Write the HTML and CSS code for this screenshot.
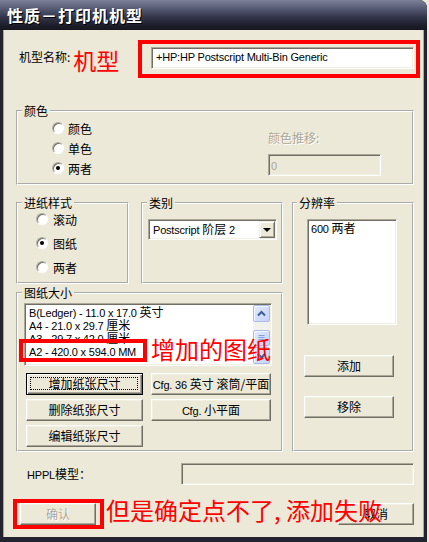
FILE: index.html
```html
<!DOCTYPE html>
<html lang="zh-CN">
<head>
    <meta charset="UTF-8">
    <title>性质－打印机机型</title>
    <link rel="stylesheet" href="styles.css">
</head>
<body>
<div class="window">
    <div class="titlebar">性质－打印机机型</div>

    <div class="client">
        <div class="name-row">
            <span class="name-label">机型名称:</span>
            <span class="note name-note">机型</span>
            <div class="sunken name-box lat">+HP:HP Postscript Multi-Bin Generic</div>
        </div>

        <fieldset class="group color-group">
            <legend>颜色</legend>
            <div class="color-body">
                <div class="radios">
                    <div class="radio"><span class="dot"></span>颜色</div>
                    <div class="radio"><span class="dot"></span>单色</div>
                    <div class="radio"><span class="dot checked"></span>两者</div>
                </div>
                <div class="shift">
                    <div class="disabled">颜色推移:</div>
                    <div class="sunken off shift-box"><span class="lat">0</span></div>
                </div>
            </div>
        </fieldset>

        <div class="middle">
            <div class="left-col">
                <div class="top-pair">
                    <fieldset class="group small-group">
                        <legend>进纸样式</legend>
                        <div class="feed-radios">
                            <div class="radio"><span class="dot"></span>滚动</div>
                            <div class="radio"><span class="dot checked"></span>图纸</div>
                            <div class="radio"><span class="dot"></span>两者</div>
                        </div>
                    </fieldset>
                    <fieldset class="group small-group">
                        <legend>类别</legend>
                        <div class="sunken combo">
                            <span class="combo-text"><span class="lat">Postscript </span>阶层<span class="lat"> 2</span></span>
                            <span class="combo-btn"><span class="arrow-down"></span></span>
                        </div>
                    </fieldset>
                </div>

                <fieldset class="group paper-group">
                    <legend>图纸大小</legend>
                    <div class="sunken paper-list">
                        <div class="paper-items">
                            <div class="item"><span class="lat">B(Ledger) - 11.0 x 17.0 </span>英寸</div>
                            <div class="item"><span class="lat">A4 - 21.0 x 29.7 </span>厘米</div>
                            <div class="item"><span class="lat">A3 - 29.7 x 42.0 </span>厘米</div>
                            <div class="item"><span class="lat">A2 - 420.0 x 594.0 MM</span></div>
                        </div>
                        <div class="scrollbar">
                            <div class="sb-btn">
                                <svg width="15" height="15" viewBox="0 0 15 15"><path d="M4 9.5 L7.5 6 L11 9.5" fill="none" stroke="#3f5c9c" stroke-width="2"/></svg>
                            </div>
                            <div class="sb-gap"></div>
                            <div class="sb-btn sb-thumb">
                                <svg width="15" height="14" viewBox="0 0 15 14"><path d="M4.5 4.5h6M4.5 6.5h6M4.5 8.5h6M4.5 10.5h6" stroke="#8aa0d4" stroke-width="1"/></svg>
                            </div>
                            <div class="sb-track"></div>
                            <div class="sb-btn">
                                <svg width="15" height="15" viewBox="0 0 15 15"><path d="M4 6 L7.5 9.5 L11 6" fill="none" stroke="#3f5c9c" stroke-width="2"/></svg>
                            </div>
                        </div>
                    </div>
                    <div class="paper-buttons">
                        <div class="btn focus"><span>增加纸张尺寸</span></div>
                        <div class="btn"><span class="lat">Cfg. 36 </span>英寸 滚筒/平面</div>
                        <div class="btn">删除纸张尺寸</div>
                        <div class="btn"><span class="lat">Cfg. </span>小平面</div>
                        <div class="btn">编辑纸张尺寸</div>
                    </div>
                </fieldset>
            </div>

            <fieldset class="group res-group">
                <legend>分辨率</legend>
                <div class="sunken res-list"><span class="lat">600 </span>两者</div>
                <div class="btn res-btn first">添加</div>
                <div class="btn res-btn">移除</div>
            </fieldset>
        </div>

        <div class="hppl-row">
            <span class="hppl-label"><span class="lat">HPPL</span>模型：</span>
            <div class="sunken off hppl-box"></div>
        </div>

        <div class="button-row">
            <div class="btn dlg-btn off-text">确认</div>
            <div class="btn dlg-btn">取消</div>
        </div>
    </div>

    <!-- red annotations drawn over the dialog -->
    <div class="mark mark-name"></div>
    <div class="mark mark-a2"></div>
    <div class="note note-paper">增加的图纸</div>
    <div class="mark mark-ok"></div>
    <div class="note note-ok">但是确定点不了, 添加失败</div>
</div>
</body>
</html>
```

FILE: styles.css
```css
body {
    margin: 0;
    background: #ece9d8;
    font-family: "Noto Sans CJK SC", sans-serif;
    font-size: 12px;
    color: #000;
}

.lat {
    font-family: "Liberation Sans", "Noto Sans CJK SC", sans-serif;
    font-size: 11px;
    letter-spacing: -0.2px;
}

.window {
    position: relative;
    width: 427px;
    height: 542px;
    box-sizing: border-box;
    padding: 0 3px 5px 3px;
    background: #23242f;
    border-top-right-radius: 8px;
    display: flex;
    flex-direction: column;
}

.titlebar {
    height: 30px;
    margin: 0 -3px;
    padding-left: 7px;
    background: linear-gradient(#7d8199 0%, #5b5f78 25%, #35384d 55%, #1d1e2b 85%, #16161f 100%);
    border-top-right-radius: 8px;
    color: #fff;
    font-size: 16px;
    font-weight: bold;
    line-height: 30px;
    letter-spacing: 1px;
    text-shadow: 1px 1px 0 #000;
}

.client {
    flex: 1;
    background: #ece9d8;
    box-shadow: inset 1px 0 0 #aca899, inset -1px 0 0 #aca899;
    padding: 10px 10px 0 13px;
}

/* common controls */
.sunken {
    box-sizing: border-box;
    background: #fff;
    border: 1px solid;
    border-color: #aca899 #fff #fff #aca899;
    box-shadow: inset 1px 1px 0 #716f64, inset -1px -1px 0 #f1efe2;
    padding: 1px;
}

.sunken.off {
    background: #ece9d8;
    color: #aca899;
}

.btn {
    position: relative;
    box-sizing: border-box;
    height: 22px;
    background: #ece9d8;
    border: 1px solid;
    border-color: #fff #716f64 #716f64 #fff;
    box-shadow: inset -1px -1px 0 #aca899, inset 1px 1px 0 #f1efe2;
    text-align: center;
    line-height: 20px;
    white-space: nowrap;
}

.btn.focus {
    border-color: #000;
    box-shadow: inset 1px 1px 0 #fff, inset -1px -1px 0 #716f64, inset -2px -2px 0 #aca899;
}

.btn.focus::after {
    content: "";
    position: absolute;
    left: 3px;
    top: 3px;
    right: 4px;
    bottom: 4px;
    border: 1px dotted #000;
}

.off-text, .disabled {
    color: #aca899;
    text-shadow: 1px 1px 0 #fff;
}

.group {
    box-sizing: border-box;
    margin: 0;
    padding: 0;
    min-width: 0;
    border: 2px groove #fff;
}

.group legend {
    margin-left: 4px;
    padding: 0 2px;
    line-height: 14px;
}

.radio {
    display: flex;
    align-items: center;
    height: 20px;
}

.dot {
    position: relative;
    box-sizing: border-box;
    width: 12px;
    height: 12px;
    margin-right: 4px;
    border-radius: 50%;
    background: #fff;
    border: 1px solid;
    border-color: #aca899 #fff #fff #aca899;
    box-shadow: inset 1px 1px 0 #716f64, 0 0 0 0.5px #f1efe2;
}

.dot.checked::after {
    content: "";
    position: absolute;
    left: 3px;
    top: 3px;
    width: 4px;
    height: 4px;
    border-radius: 50%;
    background: #000;
}

/* name row */
.name-row {
    display: flex;
    align-items: flex-start;
    height: 38px;
}

.name-label {
    margin: 10px 0 0 3px;
    line-height: 14px;
}

.note {
    color: #f00;
    font-size: 24px;
    line-height: 24px;
    white-space: nowrap;
}

.name-note {
    margin: 8px 0 0 3px;
    font-size: 23px;
}

.name-box {
    margin: 7px 0 0 auto;
    width: 263px;
    height: 22px;
    padding-left: 4px;
    line-height: 17px;
}

/* colour group */
.color-group {
    margin-top: 26px;
}

.color-body {
    display: grid;
    grid-template-columns: 250px 1fr;
    padding-bottom: 5px;
}

.radios {
    padding-left: 34px;
}

.shift {
    padding-top: 13px;
    line-height: 14px;
}

.shift-box {
    margin-top: 9px;
    width: 113px;
    height: 22px;
    padding-left: 2px;
    line-height: 18px;
}

/* middle block */
.middle {
    display: grid;
    grid-template-columns: 267px 122px;
    column-gap: 9px;
    margin-top: 11px;
}

.left-col {
    display: flex;
    flex-direction: column;
    gap: 2px;
}

.top-pair {
    display: grid;
    grid-template-columns: 113px 142px;
    column-gap: 12px;
}

.small-group {
    height: 88px;
}

.feed-radios {
    display: flex;
    flex-direction: column;
    gap: 6px;
    padding-left: 18px;
}

.feed-radios .radio {
    height: 18px;
}

.feed-radios .dot {
    margin-right: 5px;
}

.combo {
    display: flex;
    align-items: center;
    justify-content: space-between;
    margin: 9px 0 0 5px;
    width: 129px;
    height: 21px;
}

.combo-text {
    padding-left: 3px;
    line-height: 14px;
}

.combo-btn {
    box-sizing: border-box;
    width: 16px;
    height: 17px;
    display: flex;
    align-items: center;
    justify-content: center;
    background: #ece9d8;
    border: 1px solid;
    border-color: #f1efe2 #716f64 #716f64 #f1efe2;
    box-shadow: inset 1px 1px 0 #fff, inset -1px -1px 0 #aca899;
}

.arrow-down {
    width: 0;
    height: 0;
    border-left: 4px solid transparent;
    border-right: 4px solid transparent;
    border-top: 4px solid #000;
}

/* paper sizes */
.paper-group {
    height: 166px;
}

.paper-list {
    display: flex;
    margin: 3px 0 0 6px;
    width: 248px;
    height: 63px;
}

.paper-items {
    flex: 1;
    padding: 0 0 0 3px;
    overflow: hidden;
    white-space: nowrap;
}

.item {
    height: 13px;
    line-height: 13px;
}

.scrollbar {
    width: 17px;
    display: flex;
    flex-direction: column;
    background: #f3f1ec;
}

.sb-btn {
    box-sizing: border-box;
    height: 17px;
    display: flex;
    align-items: center;
    justify-content: center;
    border: 1px solid #a9bce9;
    border-radius: 2px;
    background: linear-gradient(135deg, #e2eafd, #c3d3f8);
    box-shadow: inset 1px 1px 0 #f4f7fe;
}

.sb-gap {
    height: 8px;
}

.sb-thumb {
    height: 16px;
}

.sb-track {
    flex: 1;
}

.paper-buttons {
    display: grid;
    grid-template-columns: 117px 120px;
    grid-auto-rows: 22px;
    column-gap: 8px;
    row-gap: 4px;
    margin-top: 7px;
    padding-left: 8px;
}

/* resolution */
.res-group legend {
    margin-left: 3px;
}

.res-list {
    margin: 9px 0 0 13px;
    width: 90px;
    height: 106px;
    padding: 1px 3px;
    line-height: 13px;
}

.res-btn {
    margin: 19px 0 0 10px;
    width: 90px;
}

.res-btn.first {
    margin-top: 30px;
}

/* bottom rows */
.hppl-row {
    display: flex;
    align-items: center;
    height: 22px;
    margin-top: 11px;
}

.hppl-label {
    padding-left: 11px;
    line-height: 14px;
}

.hppl-box {
    margin-left: auto;
    width: 233px;
    height: 22px;
}

.button-row {
    display: flex;
    justify-content: space-between;
    margin-top: 18px;
    padding-left: 4px;
}

.dlg-btn {
    width: 76px;
}

/* red marks over the dialog */
.mark {
    position: absolute;
    box-sizing: border-box;
    border: 4px solid #f00;
}

.mark-name {
    left: 138px;
    top: 40px;
    width: 282px;
    height: 38px;
}

.mark-a2 {
    left: 19px;
    top: 339px;
    width: 128px;
    height: 23px;
}

.mark-ok {
    left: 13px;
    top: 499px;
    width: 91px;
    height: 30px;
}

.note-paper {
    position: absolute;
    left: 151px;
    top: 337px;
}

.note-ok {
    position: absolute;
    left: 106px;
    top: 498px;
}
```
